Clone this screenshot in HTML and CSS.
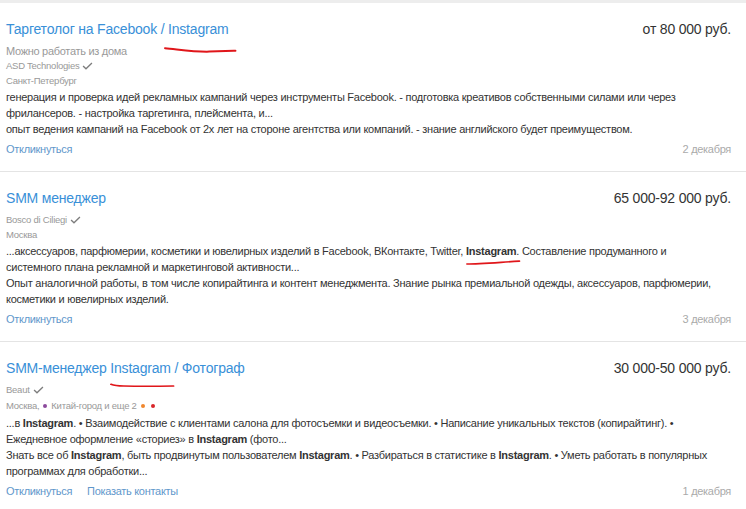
FILE: index.html
```html
<!DOCTYPE html>
<html lang="ru">
<head>
<meta charset="utf-8">
<title>Вакансии</title>
<link rel="stylesheet" href="styles.css">
</head>
<body>
<div class="list">
  <div class="card">
    <div class="head">
      <a class="title" href="#">Таргетолог на Facebook / <span class="marked">Instagram<svg class="mark mark1" viewBox="0 0 72 6" preserveAspectRatio="none"><path d="M1 1.2 C 15 2.5, 30 5, 45 4.6 S 65 4, 71 3.8" /></svg></span></a>
      <span class="salary">от 80 000 руб.</span>
    </div>
    <div class="remote">Можно работать из дома</div>
    <div class="meta">ASD Technologies <svg class="check" viewBox="0 0 12 9"><path d="M1 4.5 L4.3 7.6 L11 1.2" /></svg></div>
    <div class="meta">Санкт-Петербург</div>
    <div class="desc">
      <p>генерация и проверка идей рекламных кампаний через инструменты Facebook. - подготовка креативов собственными силами или через фрилансеров. - настройка таргетинга, плейсмента, и...</p>
      <p>опыт ведения кампаний на Facebook от 2х лет на стороне агентства или компаний. - знание английского будет преимуществом.</p>
    </div>
    <div class="foot">
      <div class="actions"><a href="#">Откликнуться</a></div>
      <span class="date">2 декабря</span>
    </div>
  </div>
  <div class="card">
    <div class="head">
      <a class="title" href="#">SMM менеджер</a>
      <span class="salary">65 000-92 000 руб.</span>
    </div>
    <div class="meta">Bosco di Ciliegi <svg class="check" viewBox="0 0 12 9"><path d="M1 4.5 L4.3 7.6 L11 1.2" /></svg></div>
    <div class="meta">Москва</div>
    <div class="desc">
      <p>...аксессуаров, парфюмерии, косметики и ювелирных изделий в Facebook, ВКонтакте, Twitter, <b class="marked">Instagram<svg class="mark mark2" viewBox="0 0 54 6" preserveAspectRatio="none"><path d="M1 4.8 C 12 4.8, 25 3.5, 53 1.4" /></svg></b>. Составление продуманного и системного плана рекламной и маркетинговой активности...</p>
      <p>Опыт аналогичной работы, в том числе копирайтинга и контент менеджмента. Знание рынка премиальной одежды, аксессуаров, парфюмерии, косметики и ювелирных изделий.</p>
    </div>
    <div class="foot">
      <div class="actions"><a href="#">Откликнуться</a></div>
      <span class="date">3 декабря</span>
    </div>
  </div>
  <div class="card">
    <div class="head">
      <a class="title" href="#">SMM-менеджер <span class="marked">Instagram<svg class="mark mark3" viewBox="0 0 66 6" preserveAspectRatio="none"><path d="M1 1.5 C 4 2.8, 7 3.4, 14 3.6 S 45 4, 65 3.6" /></svg></span> / Фотограф</a>
      <span class="salary">30 000-50 000 руб.</span>
    </div>
    <div class="meta">Beaut <svg class="check" viewBox="0 0 12 9"><path d="M1 4.5 L4.3 7.6 L11 1.2" /></svg></div>
    <div class="meta metro">Москва, <i class="dot purple"></i>Китай-город и еще 2 <i class="dot orange"></i><i class="dot red"></i></div>
    <div class="desc">
      <p>...в <b>Instagram</b>. • Взаимодействие с клиентами салона для фотосъемки и видеосъемки. • Написание уникальных текстов (копирайтинг). • Ежедневное оформление «сториез» в <b>Instagram</b> (фото...</p>
      <p>Знать все об <b>Instagram</b>, быть продвинутым пользователем <b>Instagram</b>. • Разбираться в статистике в <b>Instagram</b>. • Уметь работать в популярных программах для обработки...</p>
    </div>
    <div class="foot">
      <div class="actions"><a href="#">Откликнуться</a><a href="#">Показать контакты</a></div>
      <span class="date">1 декабря</span>
    </div>
  </div>
</div>
</body>
</html>
```
FILE: styles.css
```css
* { box-sizing: border-box; }
html, body { margin: 0; padding: 0; background: #fff; }
body {
  font-family: "Liberation Sans", Arial, sans-serif;
  color: #333;
  width: 746px;
}
.list {
  border-top: 3px solid #ededed;
}
.card {
  padding: 17px 15px 14px 6px;
  border-bottom: 1px solid #e4e4e4;
}
.card:last-child { border-bottom: none; }
.head {
  display: flex;
  justify-content: space-between;
  align-items: baseline;
  margin-bottom: 6px;
}
.title {
  font-size: 14px;
  letter-spacing: -0.2px;
  color: #3990d8;
  text-decoration: none;
  line-height: 18px;
}
.salary {
  font-size: 14px;
  letter-spacing: -0.2px;
  color: #333;
  line-height: 18px;
}
.remote {
  font-size: 11px;
  letter-spacing: -0.3px;
  color: #999;
  line-height: 15px;
  margin-top: 5px;
}
.meta {
  font-size: 9.5px;
  letter-spacing: -0.25px;
  color: #999;
  line-height: 14.5px;
  display: flex;
  align-items: center;
  gap: 3px;
}
.metro { line-height: 16px; }
.check {
  width: 11px;
  height: 8px;
  fill: none;
  stroke: #7d7d7d;
  stroke-width: 1.5;
}
.dot {
  display: inline-block;
  width: 4px;
  height: 4px;
  border-radius: 50%;
  margin: 0 1px;
}
.purple { background: #8c4a9c; }
.orange { background: #f0872e; margin-right: 2px; }
.red { background: #d9262a; }
.desc {
  font-size: 11px;
  letter-spacing: -0.25px;
  line-height: 16px;
  color: #333;
  max-width: 714px;
  margin-top: 1px;
}
.desc p { margin: 0; }
.desc b { font-weight: bold; }
.foot {
  display: flex;
  justify-content: space-between;
  align-items: baseline;
  margin-top: 5px;
  font-size: 11px;
  letter-spacing: -0.3px;
  line-height: 15px;
}
.actions { display: flex; gap: 15px; }
.actions a { color: #5f97cb; text-decoration: none; }
.date { color: #aaa; }
.marked { position: relative; }
.mark {
  position: absolute;
  fill: none;
  stroke: #e0161a;
  stroke-width: 2;
  stroke-linecap: round;
  overflow: visible;
}
.mark1 { left: -4px; width: calc(100% + 12px); height: 6px; top: calc(100% + 10px); }
.mark2 { left: 0; width: calc(100% + 4px); height: 5px; top: calc(100% + 3px); }
.mark3 { left: 0; width: calc(100% + 4px); height: 5px; top: calc(100% + 7px); }
```
